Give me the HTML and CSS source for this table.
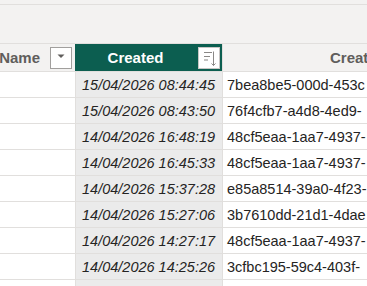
FILE: index.html
```html
<!DOCTYPE html>
<html lang="en">
<head>
    <meta charset="UTF-8">
    <meta name="viewport" content="width=device-width, initial-scale=1.0">
    <title>Data view</title>
    <link rel="stylesheet" href="styles.css">
</head>
<body>
    <div class="toolbar"></div>

    <div class="data-grid">
        <div class="head-cell head-name">
            <span class="head-label">Name</span>
            <span class="head-btn">
                <svg width="20" height="20" viewBox="0 0 20 20"><path d="M6.5 6.5 H13.5 L10 10 Z" fill="#605e5c"/></svg>
            </span>
        </div>
        <div class="head-cell head-created">
            <span class="head-label">Created</span>
            <span class="head-btn sort-btn">
                <svg width="20" height="20" viewBox="0 0 20 20" fill="none" stroke="#8a8886" stroke-width="1">
                    <path d="M5 4.5 H13 M5 8.5 H11 M5 12 H9"/>
                    <path d="M14.5 3.5 V17.5 M12.5 15.5 L14.5 17.5 L16.5 15.5"/>
                </svg>
            </span>
        </div>
        <div class="head-cell head-other">
            <span class="head-label">Creat</span>
        </div>

        <div class="cell"></div>
        <div class="cell cell-date">15/04/2026 08:44:45</div>
        <div class="cell cell-id">7bea8be5-000d-453c</div>

        <div class="cell"></div>
        <div class="cell cell-date">15/04/2026 08:43:50</div>
        <div class="cell cell-id">76f4cfb7-a4d8-4ed9-</div>

        <div class="cell"></div>
        <div class="cell cell-date">14/04/2026 16:48:19</div>
        <div class="cell cell-id">48cf5eaa-1aa7-4937-</div>

        <div class="cell"></div>
        <div class="cell cell-date">14/04/2026 16:45:33</div>
        <div class="cell cell-id">48cf5eaa-1aa7-4937-</div>

        <div class="cell"></div>
        <div class="cell cell-date">14/04/2026 15:37:28</div>
        <div class="cell cell-id">e85a8514-39a0-4f23-</div>

        <div class="cell"></div>
        <div class="cell cell-date">14/04/2026 15:27:06</div>
        <div class="cell cell-id">3b7610dd-21d1-4dae</div>

        <div class="cell"></div>
        <div class="cell cell-date">14/04/2026 14:27:17</div>
        <div class="cell cell-id">48cf5eaa-1aa7-4937-</div>

        <div class="cell"></div>
        <div class="cell cell-date">14/04/2026 14:25:26</div>
        <div class="cell cell-id">3cfbc195-59c4-403f-</div>

        <div class="cell cell-last"></div>
        <div class="cell cell-date cell-last"></div>
        <div class="cell cell-id cell-last"></div>
    </div>
</body>
</html>
```

FILE: styles.css
```css
body {
    font-family: "Liberation Sans", Arial, sans-serif;
    margin: 0;
    height: 286px;
    background-color: #f3f2f1;
    color: #252423;
    overflow: hidden;
}
.toolbar {
    height: 4px;
    border-bottom: 1px solid #e1dfdd;
}
.data-grid {
    margin-top: 38px;
    display: grid;
    grid-template-columns: 75px 146px 1fr;
    grid-template-rows: 27px repeat(8, 25px) 6px;
    gap: 1px;
    background-color: #e1dfdd;
    border-top: 1px solid #e1dfdd;
}
.head-cell {
    display: flex;
    align-items: center;
    background-color: #f3f2f1;
    font-size: 15px;
    font-weight: bold;
    color: #605e5c;
    white-space: nowrap;
    overflow: hidden;
}
.head-name {
    justify-content: flex-end;
    gap: 10px;
    padding-right: 3px;
}
.head-created {
    background-color: #0c5e50;
    color: white;
    padding-right: 2px;
    margin-left: -1px;
}
.head-created .head-label {
    flex-grow: 1;
    text-align: center;
    padding-right: 2px;
}
.head-other {
    padding-left: 107px;
}
.head-btn {
    display: flex;
    width: 20px;
    height: 20px;
    background-color: white;
    border: 1px solid #a19f9d;
}
.sort-btn {
    border-color: #c8c6c4;
}
.cell {
    display: flex;
    align-items: center;
    background-color: white;
    font-size: 14.5px;
    white-space: nowrap;
    overflow: hidden;
}
.cell-date {
    background-color: #ebebeb;
    font-style: italic;
    padding-left: 6px;
}
.cell-id {
    padding-left: 4px;
}
```
